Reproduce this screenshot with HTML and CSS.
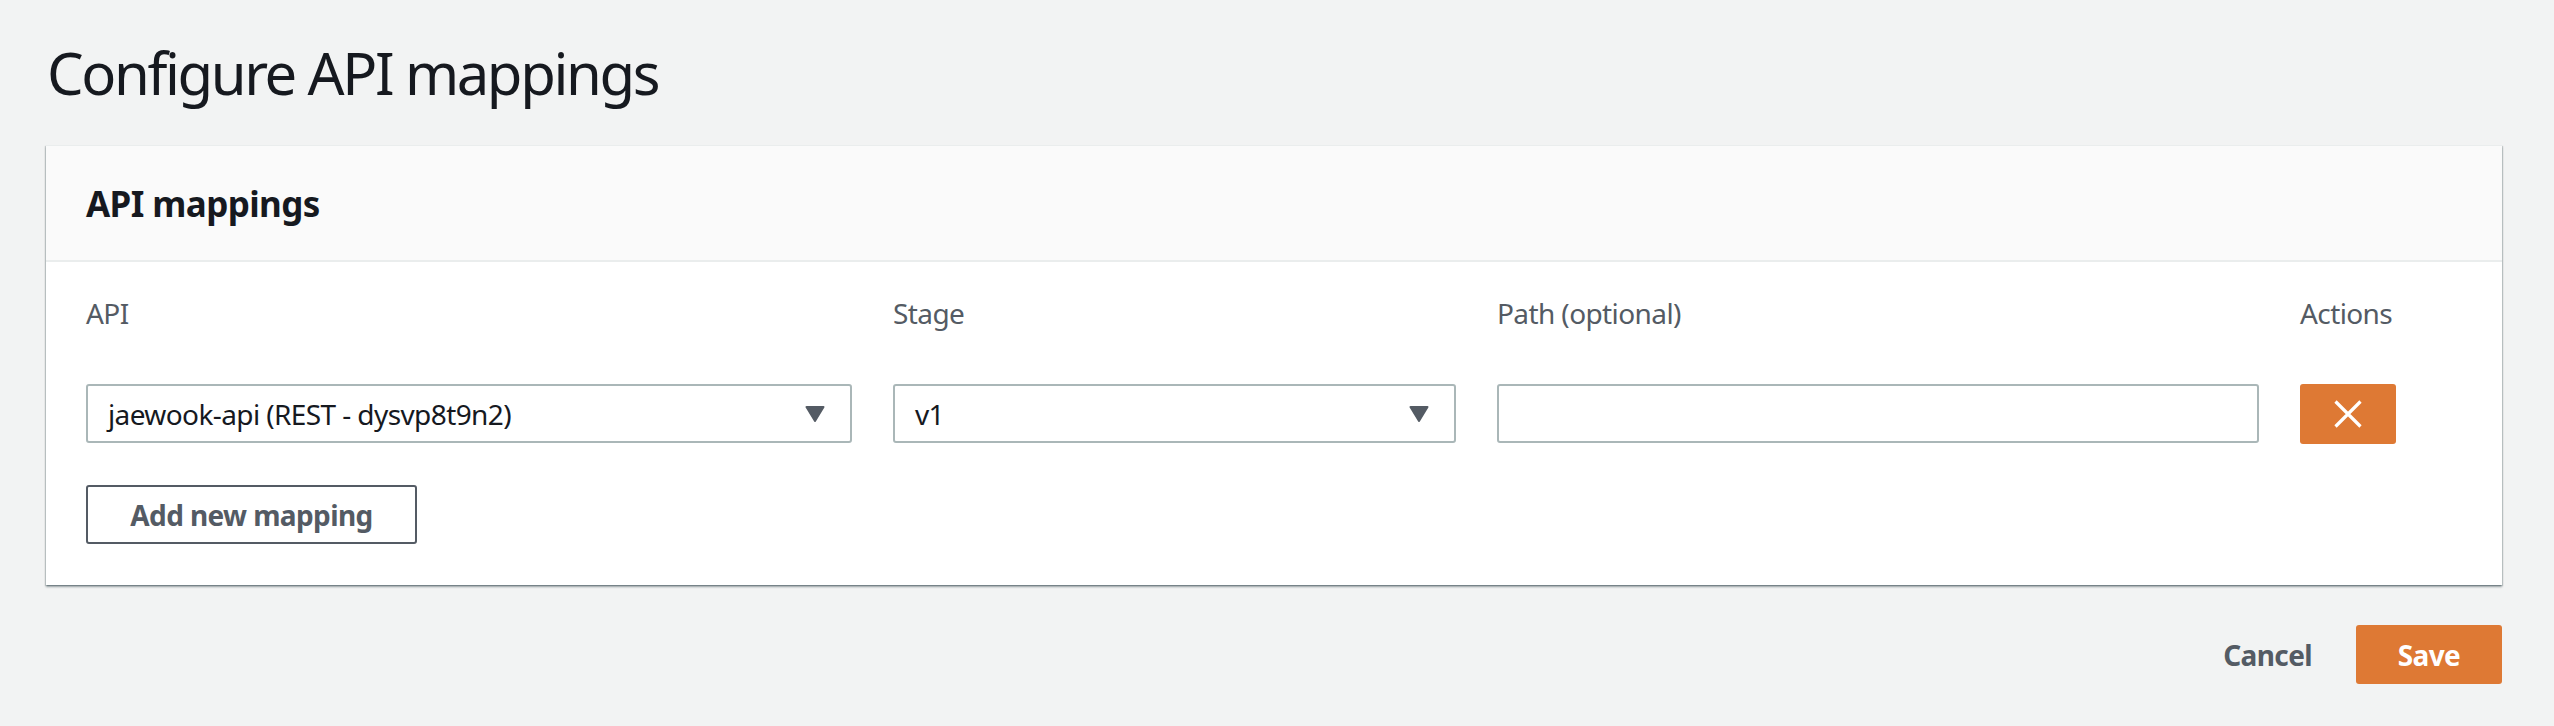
FILE: index.html
```html
<!DOCTYPE html>
<html lang="en">
<head>
<meta charset="utf-8">
<title>Configure API mappings</title>
<link rel="stylesheet" href="styles.css">
</head>
<body>
<main class="page">
  <h1 class="title">Configure API mappings</h1>
  <section class="panel">
    <header class="panel-header">
      <h2 class="panel-title">API mappings</h2>
    </header>
    <div class="panel-body">
      <div class="grid">
        <div class="label">API</div>
        <div class="label">Stage</div>
        <div class="label">Path (optional)</div>
        <div class="label">Actions</div>

        <div class="select">
          <span class="select-text">jaewook-api (REST - dysvp8t9n2)</span>
          <svg class="caret" width="20" height="16" viewBox="0 0 20 16"><path d="M1.5 1 H18.5 L10 15 Z" fill="#545b64" stroke="#545b64" stroke-width="2" stroke-linejoin="round"/></svg>
        </div>
        <div class="select">
          <span class="select-text">v1</span>
          <svg class="caret" width="20" height="16" viewBox="0 0 20 16"><path d="M1.5 1 H18.5 L10 15 Z" fill="#545b64" stroke="#545b64" stroke-width="2" stroke-linejoin="round"/></svg>
        </div>
        <div class="input"></div>
        <button class="remove-btn" type="button" aria-label="Remove">
          <svg width="28" height="28" viewBox="0 0 28 28"><path d="M1.5 1.5 L26.5 26.5 M26.5 1.5 L1.5 26.5" stroke="#ffffff" stroke-width="3.2" fill="none"/></svg>
        </button>
      </div>
      <button class="add-btn" type="button">Add new mapping</button>
    </div>
  </section>
  <footer class="footer">
    <span class="cancel">Cancel</span>
    <button class="save-btn" type="button">Save</button>
  </footer>
</main>
</body>
</html>
```
FILE: styles.css
```css
html, body {
  margin: 0;
  padding: 0;
  background: #f2f3f3;
}

body {
  font-family: "Noto Sans", "Open Sans", sans-serif;
  color: #16191f;
  width: 2554px;
  height: 726px;
  overflow: hidden;
}

.page {
  padding: 38px 52px 0 46px;
}

.title {
  margin: 0 0 37px 1px;
  font-size: 58px;
  line-height: 70px;
  font-weight: 400;
  letter-spacing: -2.4px;
  color: #16191f;
}

.panel {
  background: #ffffff;
  border-top: 1px solid #eaeded;
  box-shadow: 0 2px 2px rgba(0, 28, 36, 0.35), 1px 1px 1px rgba(0, 28, 36, 0.15), -1px 1px 1px rgba(0, 28, 36, 0.15);
}

.panel-header {
  background: #fafafa;
  border-bottom: 2px solid #eaeded;
  padding: 38px 40px 36px;
}

.panel-title {
  margin: 0;
  font-size: 35px;
  line-height: 40px;
  font-weight: 700;
  letter-spacing: -0.6px;
  color: #16191f;
}

.panel-body {
  padding: 31px 40px 41px;
}

.grid {
  display: grid;
  grid-template-columns: 766px 563px 762px 96px;
  column-gap: 41px;
  row-gap: 51px;
  align-items: start;
}

.label {
  font-size: 28px;
  line-height: 40px;
  color: #545b64;
  letter-spacing: -0.6px;
  white-space: nowrap;
}

.select,
.input {
  box-sizing: border-box;
  height: 59px;
  border: 2px solid #aab7b8;
  border-radius: 3px;
  background: #ffffff;
}

.select {
  display: flex;
  align-items: center;
  justify-content: space-between;
  padding: 0 25px 0 20px;
}

.select-text {
  font-size: 28px;
  line-height: 40px;
  letter-spacing: -0.6px;
  color: #16191f;
  white-space: nowrap;
}

.caret {
  display: block;
  flex: none;
}

.remove-btn {
  box-sizing: border-box;
  width: 96px;
  height: 60px;
  border: none;
  border-radius: 3px;
  background: #de7934;
  padding: 0;
  display: flex;
  align-items: center;
  justify-content: center;
}

.remove-btn svg {
  display: block;
}

.add-btn {
  box-sizing: border-box;
  margin-top: 41px;
  height: 59px;
  width: 331px;
  border: 2px solid #545b64;
  border-radius: 3px;
  background: #ffffff;
  font-family: "Noto Sans", "Open Sans", sans-serif;
  font-size: 28px;
  font-weight: 700;
  letter-spacing: -0.6px;
  color: #545b64;
  padding: 0;
  display: block;
}

.footer {
  display: flex;
  justify-content: flex-end;
  align-items: center;
  margin-top: 40px;
  gap: 44px;
}

.cancel {
  font-size: 28px;
  line-height: 40px;
  font-weight: 700;
  letter-spacing: -0.6px;
  color: #545b64;
}

.save-btn {
  box-sizing: border-box;
  width: 146px;
  height: 59px;
  border: none;
  border-radius: 3px;
  background: #de7934;
  color: #ffffff;
  font-family: "Noto Sans", "Open Sans", sans-serif;
  font-size: 28px;
  font-weight: 700;
  letter-spacing: -0.6px;
  padding: 0;
}
```
